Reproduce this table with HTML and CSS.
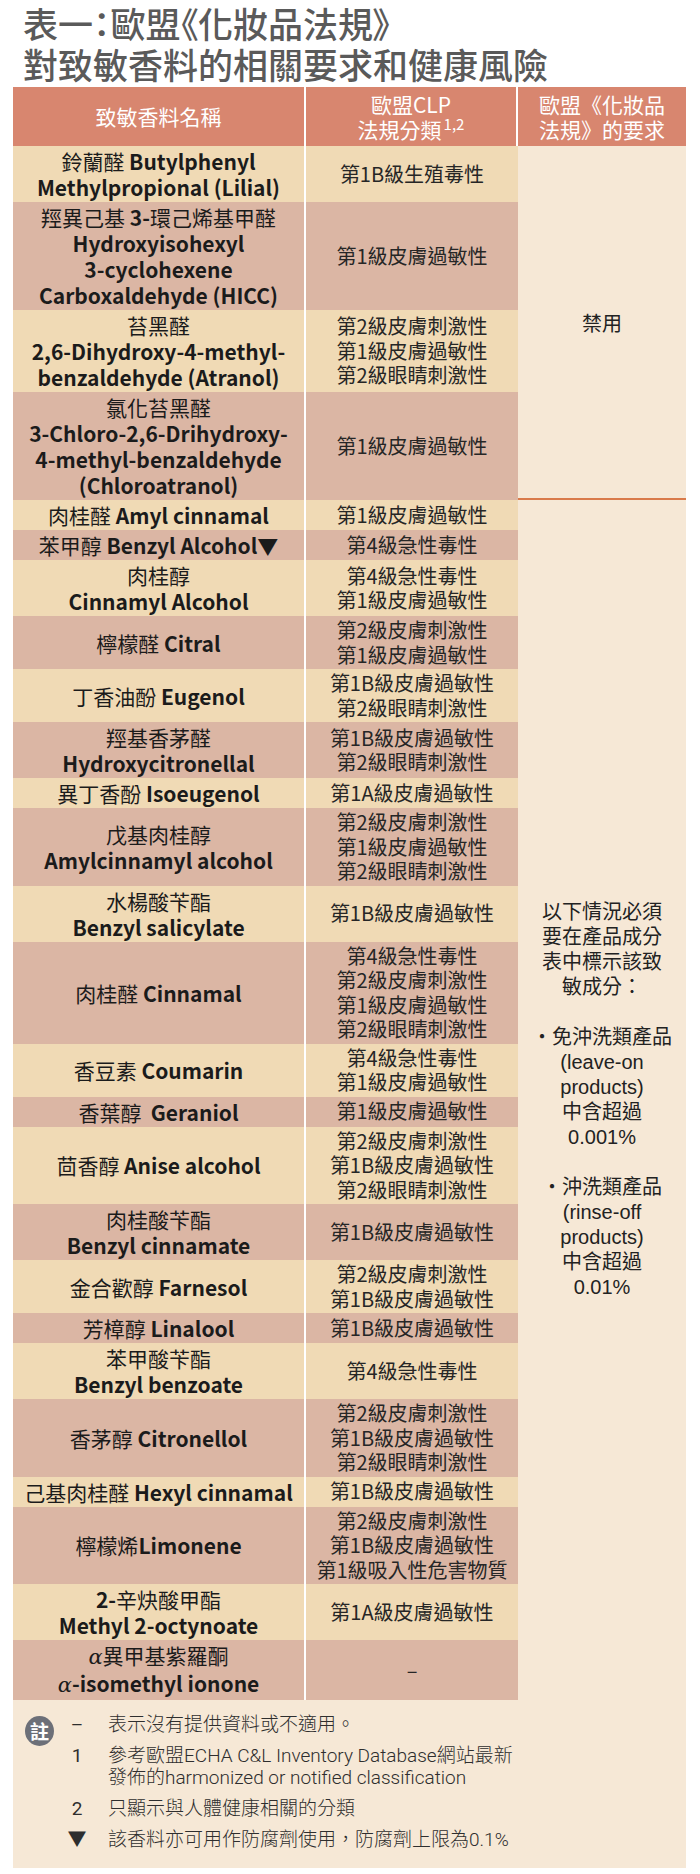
FILE: index.html
```html
<!DOCTYPE html>
<html lang="zh-Hant">
<head>
<meta charset="utf-8">
<title>表一：歐盟《化妝品法規》對致敏香料的相關要求和健康風險</title>
<link rel="stylesheet" href="styles.css">
</head>
<body>
<div class="page">
  <h1 class="title">表一：歐盟《化妝品法規》<br>對致敏香料的相關要求和健康風險</h1>
  <div class="table">
    <div class="th th-sep"><span>致敏香料名稱</span></div>
    <div class="th th-sep"><span>歐盟CLP<br>法規分類<sup>1,2</sup></span></div>
    <div class="th"><span>歐盟《化妝品<br>法規》的要求</span></div>

    <div class="name light"><span>鈴蘭醛 <b>Butylphenyl<br>Methylpropional (Lilial)</b></span></div>
    <div class="cls light"><span>第1B級生殖毒性</span></div>
    <div class="req ban"><span>禁用</span></div>

    <div class="name dark"><span>羥異己基 <b>3-</b>環己烯基甲醛<br><b>Hydroxyisohexyl<br>3-cyclohexene<br>Carboxaldehyde (HICC)</b></span></div>
    <div class="cls dark"><span>第1級皮膚過敏性</span></div>

    <div class="name light"><span>苔黑醛<br><b>2,6-Dihydroxy-4-methyl-<br>benzaldehyde (Atranol)</b></span></div>
    <div class="cls light"><span>第2級皮膚刺激性<br>第1級皮膚過敏性<br>第2級眼睛刺激性</span></div>

    <div class="name dark"><span>氯化苔黑醛<br><b>3-Chloro-2,6-Drihydroxy-<br>4-methyl-benzaldehyde<br>(Chloroatranol)</b></span></div>
    <div class="cls dark"><span>第1級皮膚過敏性</span></div>

    <div class="name light"><span>肉桂醛 <b>Amyl cinnamal</b></span></div>
    <div class="cls light"><span>第1級皮膚過敏性</span></div>
    <div class="req label"><span>以下情況必須<br>要在產品成分<br>表中標示該致<br>敏成分：<br><br>・免沖洗類產品<br>(leave-on<br>products)<br>中含超過<br>0.001%<br><br>・沖洗類產品<br>(rinse-off<br>products)<br>中含超過<br>0.01%</span></div>

    <div class="name dark"><span>苯甲醇 <b>Benzyl Alcohol▼</b></span></div>
    <div class="cls dark"><span>第4級急性毒性</span></div>

    <div class="name light"><span>肉桂醇<br><b>Cinnamyl Alcohol</b></span></div>
    <div class="cls light"><span>第4級急性毒性<br>第1級皮膚過敏性</span></div>

    <div class="name dark"><span>檸檬醛 <b>Citral</b></span></div>
    <div class="cls dark"><span>第2級皮膚刺激性<br>第1級皮膚過敏性</span></div>

    <div class="name light"><span>丁香油酚 <b>Eugenol</b></span></div>
    <div class="cls light"><span>第1B級皮膚過敏性<br>第2級眼睛刺激性</span></div>

    <div class="name dark"><span>羥基香茅醛<br><b>Hydroxycitronellal</b></span></div>
    <div class="cls dark"><span>第1B級皮膚過敏性<br>第2級眼睛刺激性</span></div>

    <div class="name light"><span>異丁香酚 <b>Isoeugenol</b></span></div>
    <div class="cls light"><span>第1A級皮膚過敏性</span></div>

    <div class="name dark"><span>戊基肉桂醇<br><b>Amylcinnamyl alcohol</b></span></div>
    <div class="cls dark"><span>第2級皮膚刺激性<br>第1級皮膚過敏性<br>第2級眼睛刺激性</span></div>

    <div class="name light"><span>水楊酸苄酯<br><b>Benzyl salicylate</b></span></div>
    <div class="cls light"><span>第1B級皮膚過敏性</span></div>

    <div class="name dark"><span>肉桂醛 <b>Cinnamal</b></span></div>
    <div class="cls dark"><span>第4級急性毒性<br>第2級皮膚刺激性<br>第1級皮膚過敏性<br>第2級眼睛刺激性</span></div>

    <div class="name light"><span>香豆素 <b>Coumarin</b></span></div>
    <div class="cls light"><span>第4級急性毒性<br>第1級皮膚過敏性</span></div>

    <div class="name dark"><span>香葉醇&nbsp; <b>Geraniol</b></span></div>
    <div class="cls dark"><span>第1級皮膚過敏性</span></div>

    <div class="name light"><span>茴香醇 <b>Anise alcohol</b></span></div>
    <div class="cls light"><span>第2級皮膚刺激性<br>第1B級皮膚過敏性<br>第2級眼睛刺激性</span></div>

    <div class="name dark"><span>肉桂酸苄酯<br><b>Benzyl cinnamate</b></span></div>
    <div class="cls dark"><span>第1B級皮膚過敏性</span></div>

    <div class="name light"><span>金合歡醇 <b>Farnesol</b></span></div>
    <div class="cls light"><span>第2級皮膚刺激性<br>第1B級皮膚過敏性</span></div>

    <div class="name dark"><span>芳樟醇 <b>Linalool</b></span></div>
    <div class="cls dark"><span>第1B級皮膚過敏性</span></div>

    <div class="name light"><span>苯甲酸苄酯<br><b>Benzyl benzoate</b></span></div>
    <div class="cls light"><span>第4級急性毒性</span></div>

    <div class="name dark"><span>香茅醇 <b>Citronellol</b></span></div>
    <div class="cls dark"><span>第2級皮膚刺激性<br>第1B級皮膚過敏性<br>第2級眼睛刺激性</span></div>

    <div class="name light"><span>己基肉桂醛 <b>Hexyl cinnamal</b></span></div>
    <div class="cls light"><span>第1B級皮膚過敏性</span></div>

    <div class="name dark"><span>檸檬烯<b>Limonene</b></span></div>
    <div class="cls dark"><span>第2級皮膚刺激性<br>第1B級皮膚過敏性<br>第1級吸入性危害物質</span></div>

    <div class="name light"><span><b>2-</b>辛炔酸甲酯<br><b>Methyl 2-octynoate</b></span></div>
    <div class="cls light"><span>第1A級皮膚過敏性</span></div>

    <div class="name dark"><span><i class="alpha">α</i>異甲基紫羅酮<br><b><i class="alpha">α</i>-isomethyl ionone</b></span></div>
    <div class="cls dark"><span>–</span></div>

    <div class="notes">
      <div class="note-icon">註</div>
      <ul class="note-list">
        <li><span class="mark">–</span><span class="txt">表示沒有提供資料或不適用。</span></li>
        <li><span class="mark">1</span><span class="txt">參考歐盟ECHA C&amp;L Inventory Database網站最新<br>發佈的harmonized or notified classification</span></li>
        <li><span class="mark">2</span><span class="txt">只顯示與人體健康相關的分類</span></li>
        <li><span class="mark">▼</span><span class="txt">該香料亦可用作防腐劑使用，防腐劑上限為0.1%</span></li>
      </ul>
    </div>
  </div>
</div>
</body>
</html>
```
FILE: styles.css
```css
body {
  margin: 0;
  background: #ffffff;
  font-family: "Noto Sans CJK TC", "Noto Sans", sans-serif;
  color: #222222;
}

.page {
  width: 700px;
  box-sizing: border-box;
  padding: 0 14px 8px 13px;
}

.title {
  margin: 0;
  height: 87px;
  box-sizing: border-box;
  padding: 2px 0 0 10px;
  font-size: 35px;
  line-height: 41px;
  font-weight: 500;
  color: #5a5a5a;
  font-feature-settings: "palt";
}

.table {
  display: grid;
  grid-template-columns: 293px 212px 168px;
}

.th {
  height: 59px;
  box-sizing: border-box;
  background: #d8866f;
  color: #ffffff;
  font-size: 21px;
  line-height: 25px;
  display: flex;
  align-items: center;
  justify-content: center;
  text-align: center;
}

.th-sep {
  border-right: 2px solid #ffffff;
}

.th sup {
  font-size: 15px;
  line-height: 0;
  vertical-align: 8px;
  margin-left: 2px;
}

.name,
.cls {
  box-sizing: border-box;
  display: flex;
  align-items: center;
  justify-content: center;
  text-align: center;
  white-space: nowrap;
  padding: 2px 0;
}

.name {
  border-right: 2px solid #ffffff;
  font-size: 21px;
  line-height: 26px;
  color: #1b1b1b;
}

.name b {
  font-weight: 700;
}

.cls {
  font-size: 20px;
  line-height: 24.5px;
  color: #262626;
}

.light {
  background: #f0dab5;
}

.dark {
  background: #dbb6a4;
}

.alpha {
  font-family: "DejaVu Serif", "Liberation Serif", serif;
  font-style: italic;
  font-weight: 400;
}

.req {
  grid-column: 3;
  background: #f6e8d6;
  font-size: 20px;
  line-height: 25px;
  color: #222222;
  display: flex;
  align-items: center;
  justify-content: center;
  text-align: center;
  box-sizing: border-box;
}

.ban {
  grid-row: span 4;
  border-bottom: 2px solid #d97a4a;
}

.label {
  grid-row: span 22;
  font-family: "Liberation Sans", "Noto Sans CJK TC", sans-serif;
}

.notes {
  grid-column: 1 / -1;
  background: #f6e8d6;
  display: flex;
  align-items: flex-start;
  padding: 14px 0 17px 12px;
}

.note-icon {
  width: 29px;
  height: 30px;
  margin-top: 2px;
  border-radius: 50%;
  background: #6c6f78;
  color: #ffffff;
  font-size: 19px;
  font-weight: 700;
  line-height: 30px;
  text-align: center;
  flex: none;
}

.note-list {
  list-style: none;
  margin: 0;
  padding: 0 0 0 9px;
  display: flex;
  flex-direction: column;
  gap: 9px;
  font-family: "Roboto", "Noto Sans CJK TC", sans-serif;
  font-weight: 300;
  font-size: 19px;
  line-height: 22px;
  color: #2e2e2e;
}

.note-list li {
  display: flex;
}

.mark {
  width: 28px;
  flex: none;
  text-align: center;
  font-weight: 400;
}

.txt {
  margin-left: 17px;
  white-space: nowrap;
}
```
